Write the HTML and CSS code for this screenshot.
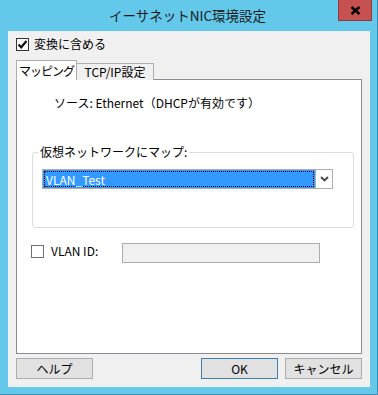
FILE: index.html
```html
<!DOCTYPE html>
<html>
<head lang="ja">
    <meta charset="UTF-8">
    <title>イーサネットNIC環境設定</title>
    <link rel="stylesheet" href="styles.css">
</head>
<body>
    <div class="window">
        <div class="titlebar">
            <span class="title">イーサネットNIC環境設定</span>
            <span class="close">
                <svg width="11" height="9" viewBox="0 0 11 9">
                    <path d="M1.5 1 L9.5 8 M9.5 1 L1.5 8" stroke="#000" stroke-width="2.4" fill="none"/>
                </svg>
            </span>
        </div>
        <div class="client">
            <div class="check-row">
                <span class="box box-dark">
                    <svg width="11" height="11" viewBox="0 0 11 11">
                        <path d="M1.5 5.5 L4.2 8.3 L9.5 2" stroke="#111" stroke-width="2.2" fill="none"/>
                    </svg>
                </span>
                <span class="check-text">変換に含める</span>
            </div>
            <div class="tabs">
                <span class="tab selected">マッピング</span>
                <span class="tab">TCP/IP設定</span>
            </div>
            <div class="panel">
                <p class="source">ソース: Ethernet（DHCPが有効です）</p>
                <fieldset class="group">
                    <legend>仮想ネットワークにマップ:</legend>
                    <div class="combo">
                        <span class="combo-value"><span class="focus">VLAN_Test</span></span>
                        <span class="combo-btn">
                            <svg width="9" height="6" viewBox="0 0 9 6">
                                <path d="M1 1 L4.5 4.5 L8 1" stroke="#444" stroke-width="1.8" fill="none"/>
                            </svg>
                        </span>
                    </div>
                </fieldset>
                <div class="vlan-row">
                    <span class="box"></span>
                    <span class="vlan-label">VLAN ID:</span>
                    <span class="field"></span>
                </div>
            </div>
            <div class="buttons">
                <span class="btn">ヘルプ</span>
                <span class="spacer"></span>
                <span class="btn btn-default">OK</span>
                <span class="btn">キャンセル</span>
            </div>
        </div>
    </div>
</body>
</html>
```

FILE: styles.css
```css
*{
    margin: 0;
    padding: 0;
    box-sizing: border-box;
}
body{
    width: 378px;
    height: 395px;
    font-family: "Noto Sans CJK JP", "Liberation Sans", sans-serif;
    font-size: 12px;
    color: #000;
}
.window{
    width: 378px;
    height: 395px;
    background: #63c8ea;
    border-right: 1px solid #3b8fb4;
    border-bottom: 1px solid #3b8fb4;
    display: flex;
    flex-direction: column;
}
.titlebar{
    height: 31px;
    position: relative;
    display: flex;
    justify-content: center;
    align-items: center;
    padding-right: 2px;
}
.title{
    font-size: 13.5px;
    color: #1a1a1a;
    line-height: 20px;
    margin-top: -1px;
}
.close{
    position: absolute;
    top: 0;
    right: 5px;
    width: 34px;
    height: 21px;
    background: #c75050;
    border: 1px solid #8a3c3c;
    border-top: none;
    display: flex;
    justify-content: center;
    align-items: center;
}
.client{
    margin: 0 7px 0 8px;
    height: 356px;
    background: #f0f0f0;
    padding: 5px 8px 0 8px;
}
.check-row{
    display: flex;
    align-items: center;
    height: 16px;
}
.box{
    width: 13px;
    height: 13px;
    border: 1px solid #707070;
    background: #fff;
    display: flex;
    justify-content: center;
    align-items: center;
}
.box-dark{
    border-color: #333;
}
.check-text{
    margin-left: 5px;
    line-height: 16px;
}
.tabs{
    margin-top: 8px;
    display: flex;
    align-items: flex-end;
    height: 20px;
    position: relative;
    z-index: 1;
    margin-bottom: -1px;
}
.tab{
    height: 17px;
    width: 77px;
    border: 1px solid #adadad;
    border-left: none;
    border-bottom: none;
    background: #f0f0f0;
    text-align: center;
    line-height: 16px;
    white-space: nowrap;
}
.tab.selected{
    height: 20px;
    width: 61px;
    border-left: 1px solid #adadad;
    background: #fff;
    line-height: 20px;
    letter-spacing: -1px;
}
.panel{
    height: 275px;
    background: #fff;
    border: 1px solid #898c95;
    padding: 15px 15px 0 15px;
}
.source{
    line-height: 16px;
    padding-left: 22px;
}
.group{
    margin-top: 33px;
    border: 1px solid #dcdcdc;
    border-radius: 3px;
    padding: 9px 20px 38px 9px;
    width: 322px;
}
.group legend{
    margin-left: -4px;
    padding: 0 2px;
    line-height: 16px;
}
.combo{
    display: flex;
    height: 20px;
    width: 291px;
    border: 1px solid #adadad;
    background: #fff;
}
.combo-value{
    flex: 1;
    background: #3399ff;
    padding: 1px;
}
.focus{
    display: block;
    height: 100%;
    border: 1px dotted #000;
    color: #fff;
    line-height: 15px;
    padding-left: 1px;
}
.combo-btn{
    width: 17px;
    border-left: 1px solid #adadad;
    display: flex;
    justify-content: center;
    align-items: center;
}
.vlan-row{
    margin-top: 15px;
    display: flex;
    align-items: center;
    height: 20px;
}
.vlan-row .box{
    margin-top: -4px;
    margin-left: -1px;
}
.vlan-label{
    margin-left: 7px;
    width: 71px;
    line-height: 16px;
    margin-top: -4px;
}
.field{
    width: 198px;
    height: 20px;
    border: 1px solid #adadad;
    background: #f0f0f0;
}
.buttons{
    margin-top: 4px;
    display: flex;
    gap: 7px;
}
.spacer{
    flex: 1;
}
.btn{
    width: 77px;
    height: 21px;
    border: 1px solid #adadad;
    background: #e1e1e1;
    text-align: center;
    line-height: 19px;
}
.btn-default{
    border-color: #3c7fb1;
}
```
